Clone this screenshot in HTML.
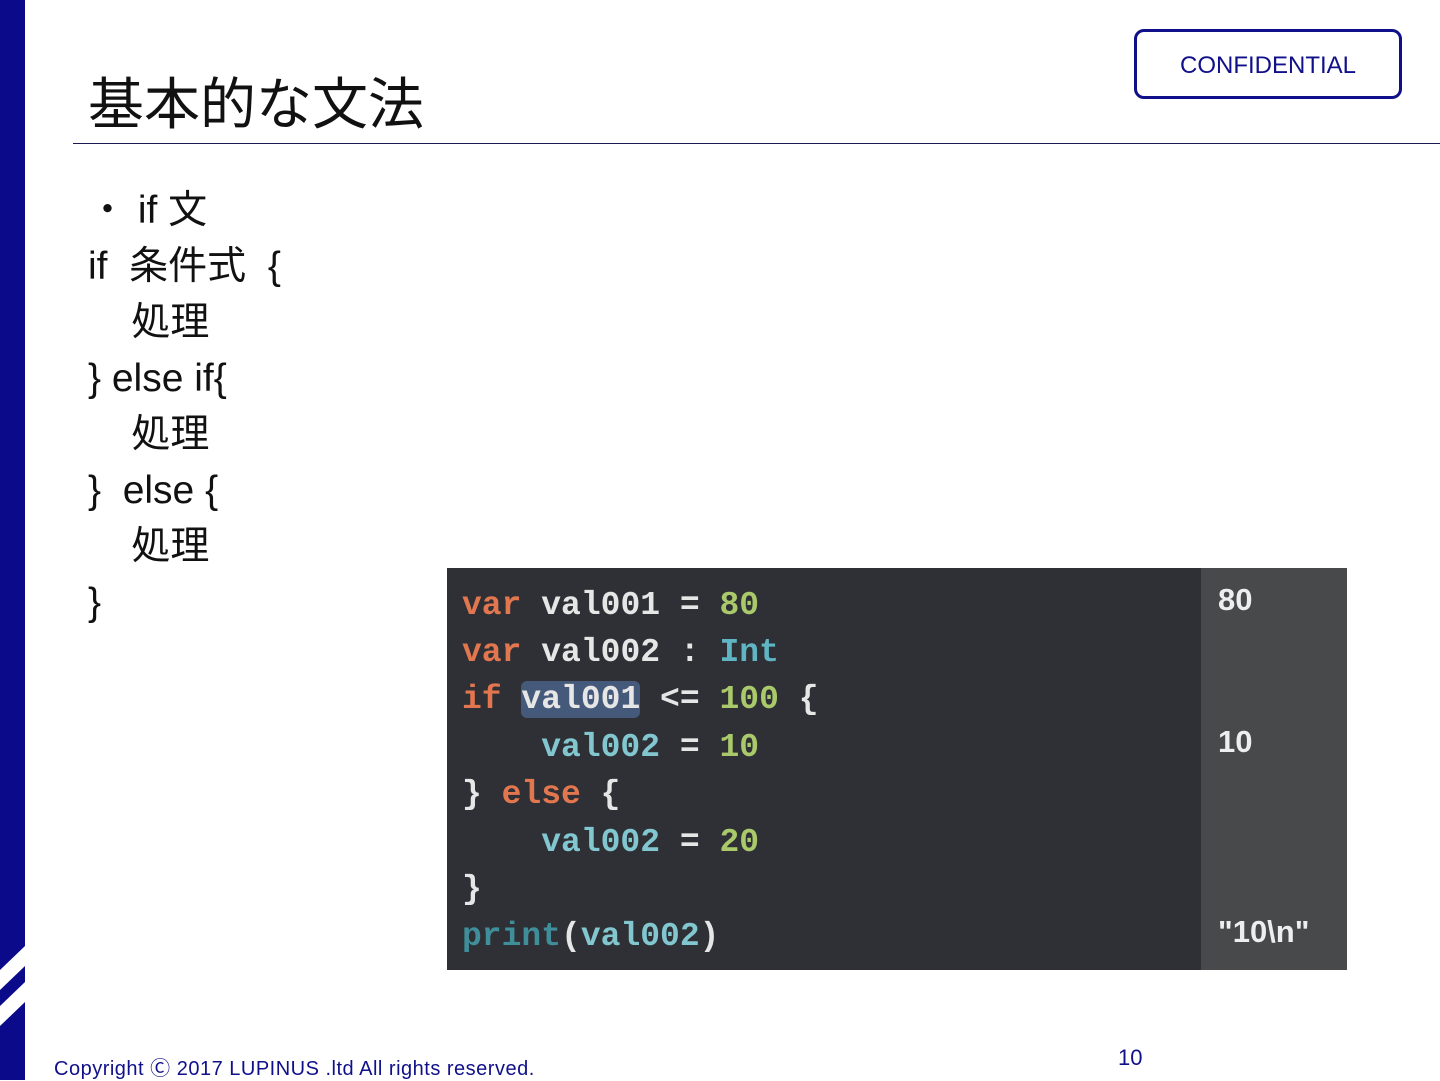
<!DOCTYPE html>
<html><head><meta charset="utf-8"><style>
body{margin:0;width:1440px;height:1080px;position:relative;background:#fff;overflow:hidden;font-family:"Liberation Sans","Noto Sans CJK JP",sans-serif;}
.bar{position:absolute;left:0;top:0;width:25px;height:1080px;background:#0a0a8a;}
.t{position:absolute;left:88px;top:70px;font-size:56px;line-height:70px;color:#111;}
.rule{position:absolute;left:73px;top:143px;width:1367px;height:1px;background:#1a1a50;}
.conf{position:absolute;left:1134px;top:29px;width:262px;height:64px;border:3px solid #10108a;border-radius:10px;color:#10108a;font-size:24px;text-align:center;line-height:68px;}
.l{position:absolute;left:88px;font-size:39px;color:#111;line-height:50px;white-space:pre;}
.code{position:absolute;left:447px;top:568px;width:754px;height:402px;background:#2e3035;}
.res{position:absolute;left:1201px;top:568px;width:146px;height:402px;background:#48494b;}
.c{position:absolute;left:462px;font-family:"Liberation Mono",monospace;font-weight:bold;font-size:33px;line-height:40px;color:#e6e6e6;white-space:pre;}
.r{position:absolute;left:1218px;font-family:"Liberation Sans",sans-serif;font-weight:bold;font-size:31px;line-height:40px;color:#eee;}
.k{color:#e2774f}.n{color:#a9c96a}.ty{color:#5fb5c4}.v{color:#82c7d0}.p{color:#3f8e9a}
.hl{background:#45597a;border-radius:6px;}
.foot{position:absolute;left:54px;top:1052px;font-size:20px;color:#10108a;letter-spacing:0.5px;}
.pg{position:absolute;left:1118px;top:1045px;font-size:22px;color:#10108a;}
</style></head><body>
<div class="bar"></div>
<svg style="position:absolute;left:0;top:930px" width="25" height="110"><polygon points="25,16 25,36 0,60 0,40" fill="#fff"/><polygon points="25,52 25,72 0,96 0,76" fill="#fff"/></svg>
<div class="t">基本的な文法</div>
<div class="rule"></div>
<div class="conf">CONFIDENTIAL</div>
<div class="l" style="top:186px">・ if 文</div>
<div class="l" style="top:242px">if  条件式  {</div>
<div class="l" style="top:298px">    処理</div>
<div class="l" style="top:354px">} else if{</div>
<div class="l" style="top:410px">    処理</div>
<div class="l" style="top:466px">}  else {</div>
<div class="l" style="top:522px">    処理</div>
<div class="l" style="top:578px">}</div>
<div class="code"></div><div class="res"></div>
<div class="c" style="top:586px"><span class="k">var</span> val001 = <span class="n">80</span></div>
<div class="c" style="top:633px"><span class="k">var</span> val002 : <span class="ty">Int</span></div>
<div class="c" style="top:680px"><span class="k">if</span> <span class="hl">val001</span> &lt;= <span class="n">100</span> {</div>
<div class="c" style="top:728px">    <span class="v">val002</span> = <span class="n">10</span></div>
<div class="c" style="top:775px">} <span class="k">else</span> {</div>
<div class="c" style="top:823px">    <span class="v">val002</span> = <span class="n">20</span></div>
<div class="c" style="top:870px">}</div>
<div class="c" style="top:917px"><span class="p">print</span>(<span class="v">val002</span>)</div>
<div class="r" style="top:580px">80</div>
<div class="r" style="top:722px">10</div>
<div class="r" style="top:912px">"10\n"</div>
<div class="foot">Copyright Ⓒ 2017 LUPINUS .ltd All rights reserved.</div>
<div class="pg">10</div>
</body></html>
